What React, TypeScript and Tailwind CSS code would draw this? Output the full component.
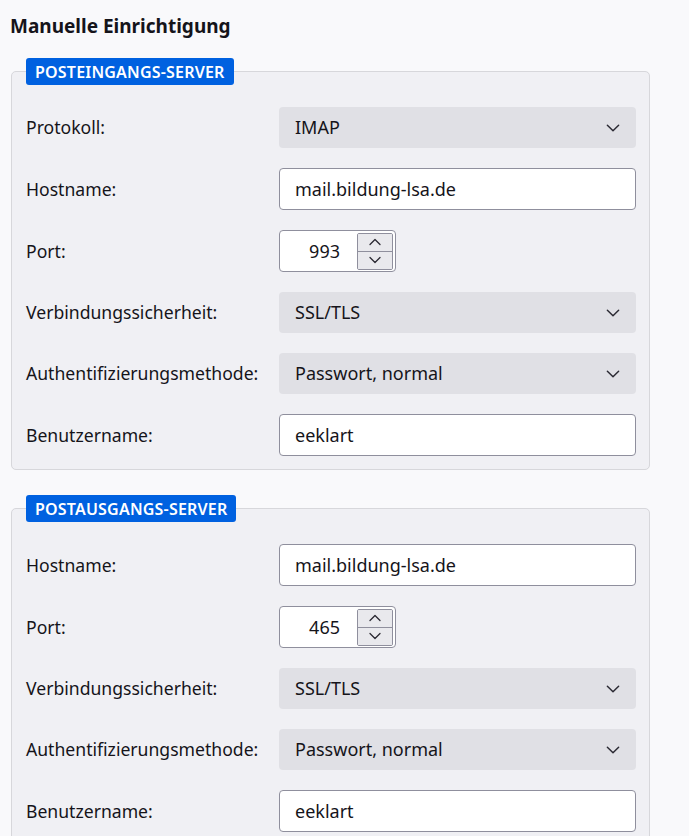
import React from 'react';

type Row =
    | { label: string; kind: 'select'; value: string }
    | { label: string; kind: 'text'; value: string }
    | { label: string; kind: 'port'; value: string };

const incoming: Row[] = [
    { label: 'Protokoll:', kind: 'select', value: 'IMAP' },
    { label: 'Hostname:', kind: 'text', value: 'mail.bildung-lsa.de' },
    { label: 'Port:', kind: 'port', value: '993' },
    { label: 'Verbindungssicherheit:', kind: 'select', value: 'SSL/TLS' },
    { label: 'Authentifizierungsmethode:', kind: 'select', value: 'Passwort, normal' },
    { label: 'Benutzername:', kind: 'text', value: 'eeklart' },
];

const outgoing: Row[] = [
    { label: 'Hostname:', kind: 'text', value: 'mail.bildung-lsa.de' },
    { label: 'Port:', kind: 'port', value: '465' },
    { label: 'Verbindungssicherheit:', kind: 'select', value: 'SSL/TLS' },
    { label: 'Authentifizierungsmethode:', kind: 'select', value: 'Passwort, normal' },
    { label: 'Benutzername:', kind: 'text', value: 'eeklart' },
];

const Chevron = ({ up = false, className = '' }: { up?: boolean; className?: string }) => (
    <svg viewBox="0 0 16 16" className={className} fill="none" stroke="currentColor" strokeWidth={1.3} strokeLinecap="round" strokeLinejoin="round">
        {up ? <path d="M3 10.5 8 5.5l5 5" /> : <path d="M3 5.5l5 5 5-5" />}
    </svg>
);

const Control = ({ row }: { row: Row }) => {
    if (row.kind === 'select') {
        return (
            <div className="h-[41px] rounded-[4px] bg-[#e0e0e5] flex items-center justify-between pl-[16px] pr-[14px] text-[18px] text-[#15141a]">
                <span>{row.value}</span>
                <Chevron className="w-[18px] h-[18px] text-[#2b2a33]" />
            </div>
        );
    }
    if (row.kind === 'port') {
        return (
            <div className="w-[117px] h-[42px] rounded-[4px] border border-[#8f8f9d] bg-white flex items-center pr-[2px]">
                <span className="flex-1 text-right pr-[17px] text-[18px] text-[#15141a]">{row.value}</span>
                <div className="w-[36px] h-[37px] flex flex-col border border-[#8f8f9d] rounded-[2px] overflow-hidden">
                    <div className="flex-1 bg-[#e9e9ed] flex items-center justify-center border-b border-[#8f8f9d]">
                        <Chevron up className="w-[16px] h-[16px] text-[#2b2a33]" />
                    </div>
                    <div className="flex-1 bg-[#e9e9ed] flex items-center justify-center">
                        <Chevron className="w-[16px] h-[16px] text-[#2b2a33]" />
                    </div>
                </div>
            </div>
        );
    }
    return (
        <div className="h-[42px] rounded-[4px] border border-[#8f8f9d] bg-white flex items-center pl-[15px] text-[18px] text-[#15141a]">
            {row.value}
        </div>
    );
};

const ServerGroup = ({ title, rows }: { title: string; rows: Row[] }) => (
    <fieldset className="w-[639px] border border-[#d7d7db] rounded-[5px] bg-[#f0f0f4] pl-[14px] pr-[13px] pb-[13px]">
        <legend className="bg-[#0061e0] text-white rounded-[3px] px-[9px] h-[27px] flex items-center text-[16px] font-semibold tracking-[0.2px]">
            {title}
        </legend>
        <div className="flex flex-col gap-[20px] pt-[22px]">
            {rows.map(row => (
                <div key={row.label} className="grid grid-cols-[253px_1fr] items-center">
                    <span className="text-[17.6px] text-[#15141a]">{row.label}</span>
                    <Control row={row} />
                </div>
            ))}
        </div>
    </fieldset>
);

export default function App() {
    return (
        <div className="min-h-screen bg-[#f9f9fb] pl-[11px] pt-[13px] overflow-hidden font-['Noto_Sans',sans-serif]">
            <h1 className="text-[19px] font-bold text-[#15141a] -ml-[1px] leading-[26px]">Manuelle Einrichtigung</h1>
            <div className="flex flex-col gap-[25px] mt-[19px]">
                <ServerGroup title="POSTEINGANGS-SERVER" rows={incoming} />
                <ServerGroup title="POSTAUSGANGS-SERVER" rows={outgoing} />
            </div>
        </div>
    );
}
